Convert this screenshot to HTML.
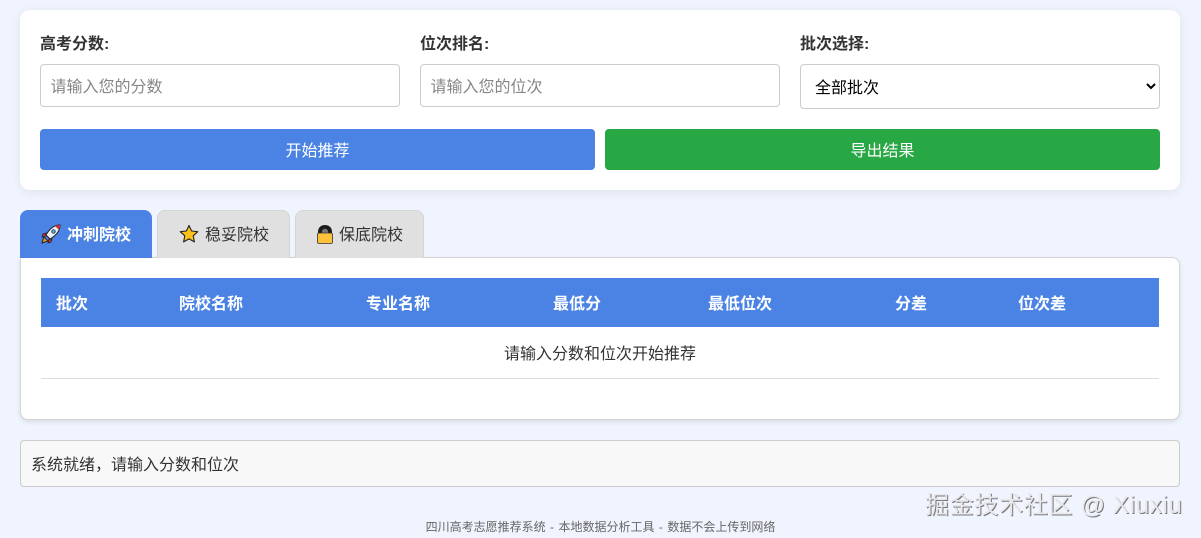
<!DOCTYPE html>
<html lang="zh"><head><meta charset="utf-8"><title>四川高考志愿推荐系统</title>
<style>
*{box-sizing:border-box}
html,body{margin:0;padding:0}
body{width:1201px;height:537px;overflow:hidden;position:relative;background:#f0f4fe;font-family:"Liberation Sans","Noto Sans CJK SC",sans-serif;font-size:16px;color:#333}
.a{position:absolute}
.t{position:absolute;white-space:nowrap;line-height:24px}
.card{left:20px;top:10px;width:1160px;height:180px;background:#fff;border-radius:10px;box-shadow:0 2px 10px rgba(0,0,0,.08)}
.lab{font-weight:bold;top:33px}
.inp{top:64px;height:43px;width:360px;border:1px solid #ccc;border-radius:4px;background:#fff;color:#868686;padding-left:9.500px;line-height:43px}
.inp span{position:relative;top:1px}
select{position:absolute;left:800px;top:64px;width:360px;height:45px;border:1px solid #ccc;border-radius:4px;background:#fff;color:#000;font:16px "Liberation Sans","Noto Sans CJK SC",sans-serif;padding:3px 10px 0}
.btn{top:129px;height:41px;width:555px;border-radius:4px;color:#fff;text-align:center;line-height:45px}
.tab{top:210px;height:48px;border:1px solid #d4d4d4;border-bottom:0;border-radius:8px 8px 0 0;background:#e0e0e0}
.panel{left:20px;top:257px;width:1160px;height:163px;background:#fff;border:1px solid #d4d4d4;border-radius:0 8px 8px 8px;box-shadow:0 2px 5px rgba(0,0,0,.1)}
.th{top:293px;color:#fff;font-weight:bold}
</style></head><body>
<div class="a card"></div>
<div class="t lab" style="left:40px">高考分数:</div>
<div class="t lab" style="left:420px">位次排名:</div>
<div class="t lab" style="left:800px">批次选择:</div>
<div class="a inp" style="left:40px"><span>请输入您的分数</span></div>
<div class="a inp" style="left:420px"><span>请输入您的位次</span></div>
<select><option>全部批次</option></select>
<div class="a btn" style="left:40px;background:#4a83e4">开始推荐</div>
<div class="a btn" style="left:605px;background:#28a745">导出结果</div>

<div class="a panel"></div>
<div class="a tab" style="left:20px;width:132px;background:#4a83e4;border-color:#4a83e4"></div>
<div class="a tab" style="left:157px;width:133px"></div>
<div class="a tab" style="left:295px;width:129px"></div>

<svg class="a" style="left:41px;top:224px" width="20" height="20" viewBox="0 0 20 20">
<path d="M3 13 L1 19 L7 17 Z" fill="#f59a23" stroke="#222" stroke-width="1"/>
<path d="M5 9 L2 10 L1 13 L5 12 Z" fill="#c9303a" stroke="#222" stroke-width=".8"/>
<path d="M11 15 L10 18 L7 19 L8 15 Z" fill="#c9303a" stroke="#222" stroke-width=".8"/>
<path d="M19 1 C14 1 9 4 5 11 L9 15 C16 11 19 6 19 1 Z" fill="#eef3f7" stroke="#222" stroke-width="1"/>
<path d="M19 1 C17 1 15 1.500 14 2 L18 6 C18.600 4.500 19 3 19 1 Z" fill="#d4313c"/>
<circle cx="12.500" cy="7.500" r="1.800" fill="#4aa8e0" stroke="#222" stroke-width=".7"/>
</svg>
<svg class="a" style="left:179px;top:224px" width="20" height="20" viewBox="0 0 20 20">
<path d="M10 1.500 L12.600 7 L18.700 7.700 L14.200 11.800 L15.400 17.900 L10 14.900 L4.600 17.900 L5.800 11.800 L1.300 7.700 L7.400 7 Z" fill="#fcc21b" stroke="#222" stroke-width="1.100" stroke-linejoin="round"/>
</svg>
<svg class="a" style="left:316px;top:224px" width="18" height="20" viewBox="0 0 18 20">
<path d="M2 10 V8 C2 3.500 5 1 9 1 C13 1 16 3.500 16 8 V10 Z" fill="#1c1c1c"/>
<path d="M6 9 V8 C6 6 7.200 4.800 9 4.800 C10.800 4.800 12 6 12 8 V9 Z" fill="#777"/>
<rect x="1.500" y="9" width="15" height="10.500" rx="1.500" fill="#fcc03a" stroke="#333" stroke-width=".8"/>
</svg>

<div class="t" style="left:67px;top:224px;color:#fff;font-weight:bold">冲刺院校</div>
<div class="t" style="left:205px;top:224px">稳妥院校</div>
<div class="t" style="left:339px;top:224px">保底院校</div>

<div class="a" style="left:41px;top:278px;width:1118px;height:49px;background:#4a83e4"></div>
<div class="t th" style="left:56px">批次</div>
<div class="t th" style="left:179px">院校名称</div>
<div class="t th" style="left:366px">专业名称</div>
<div class="t th" style="left:553px">最低分</div>
<div class="t th" style="left:708px">最低位次</div>
<div class="t th" style="left:895px">分差</div>
<div class="t th" style="left:1018px">位次差</div>
<div class="t" style="left:504px;top:343px">请输入分数和位次开始推荐</div>
<div class="a" style="left:41px;top:378px;width:1118px;height:1px;background:#ddd"></div>

<div class="a" style="left:20px;top:440px;width:1160px;height:47px;background:#f8f8f8;border:1px solid #ccc;border-radius:4px"></div>
<div class="t" style="left:31px;top:454px">系统就绪，请输入分数和位次</div>
<div class="t" style="left:0;top:516px;width:1201px;text-align:center;font-size:12px;line-height:22px;color:#666;word-spacing:1.100px">四川高考志愿推荐系统 - 本地数据分析工具 - 数据不会上传到网络</div>
<div class="t" style="left:925px;top:490px;font-size:24px;line-height:32px;letter-spacing:.7px;color:#e8e8ec;text-shadow:1px 1px 0 #777">掘金技术社区 @ Xiuxiu</div>
</body></html>
